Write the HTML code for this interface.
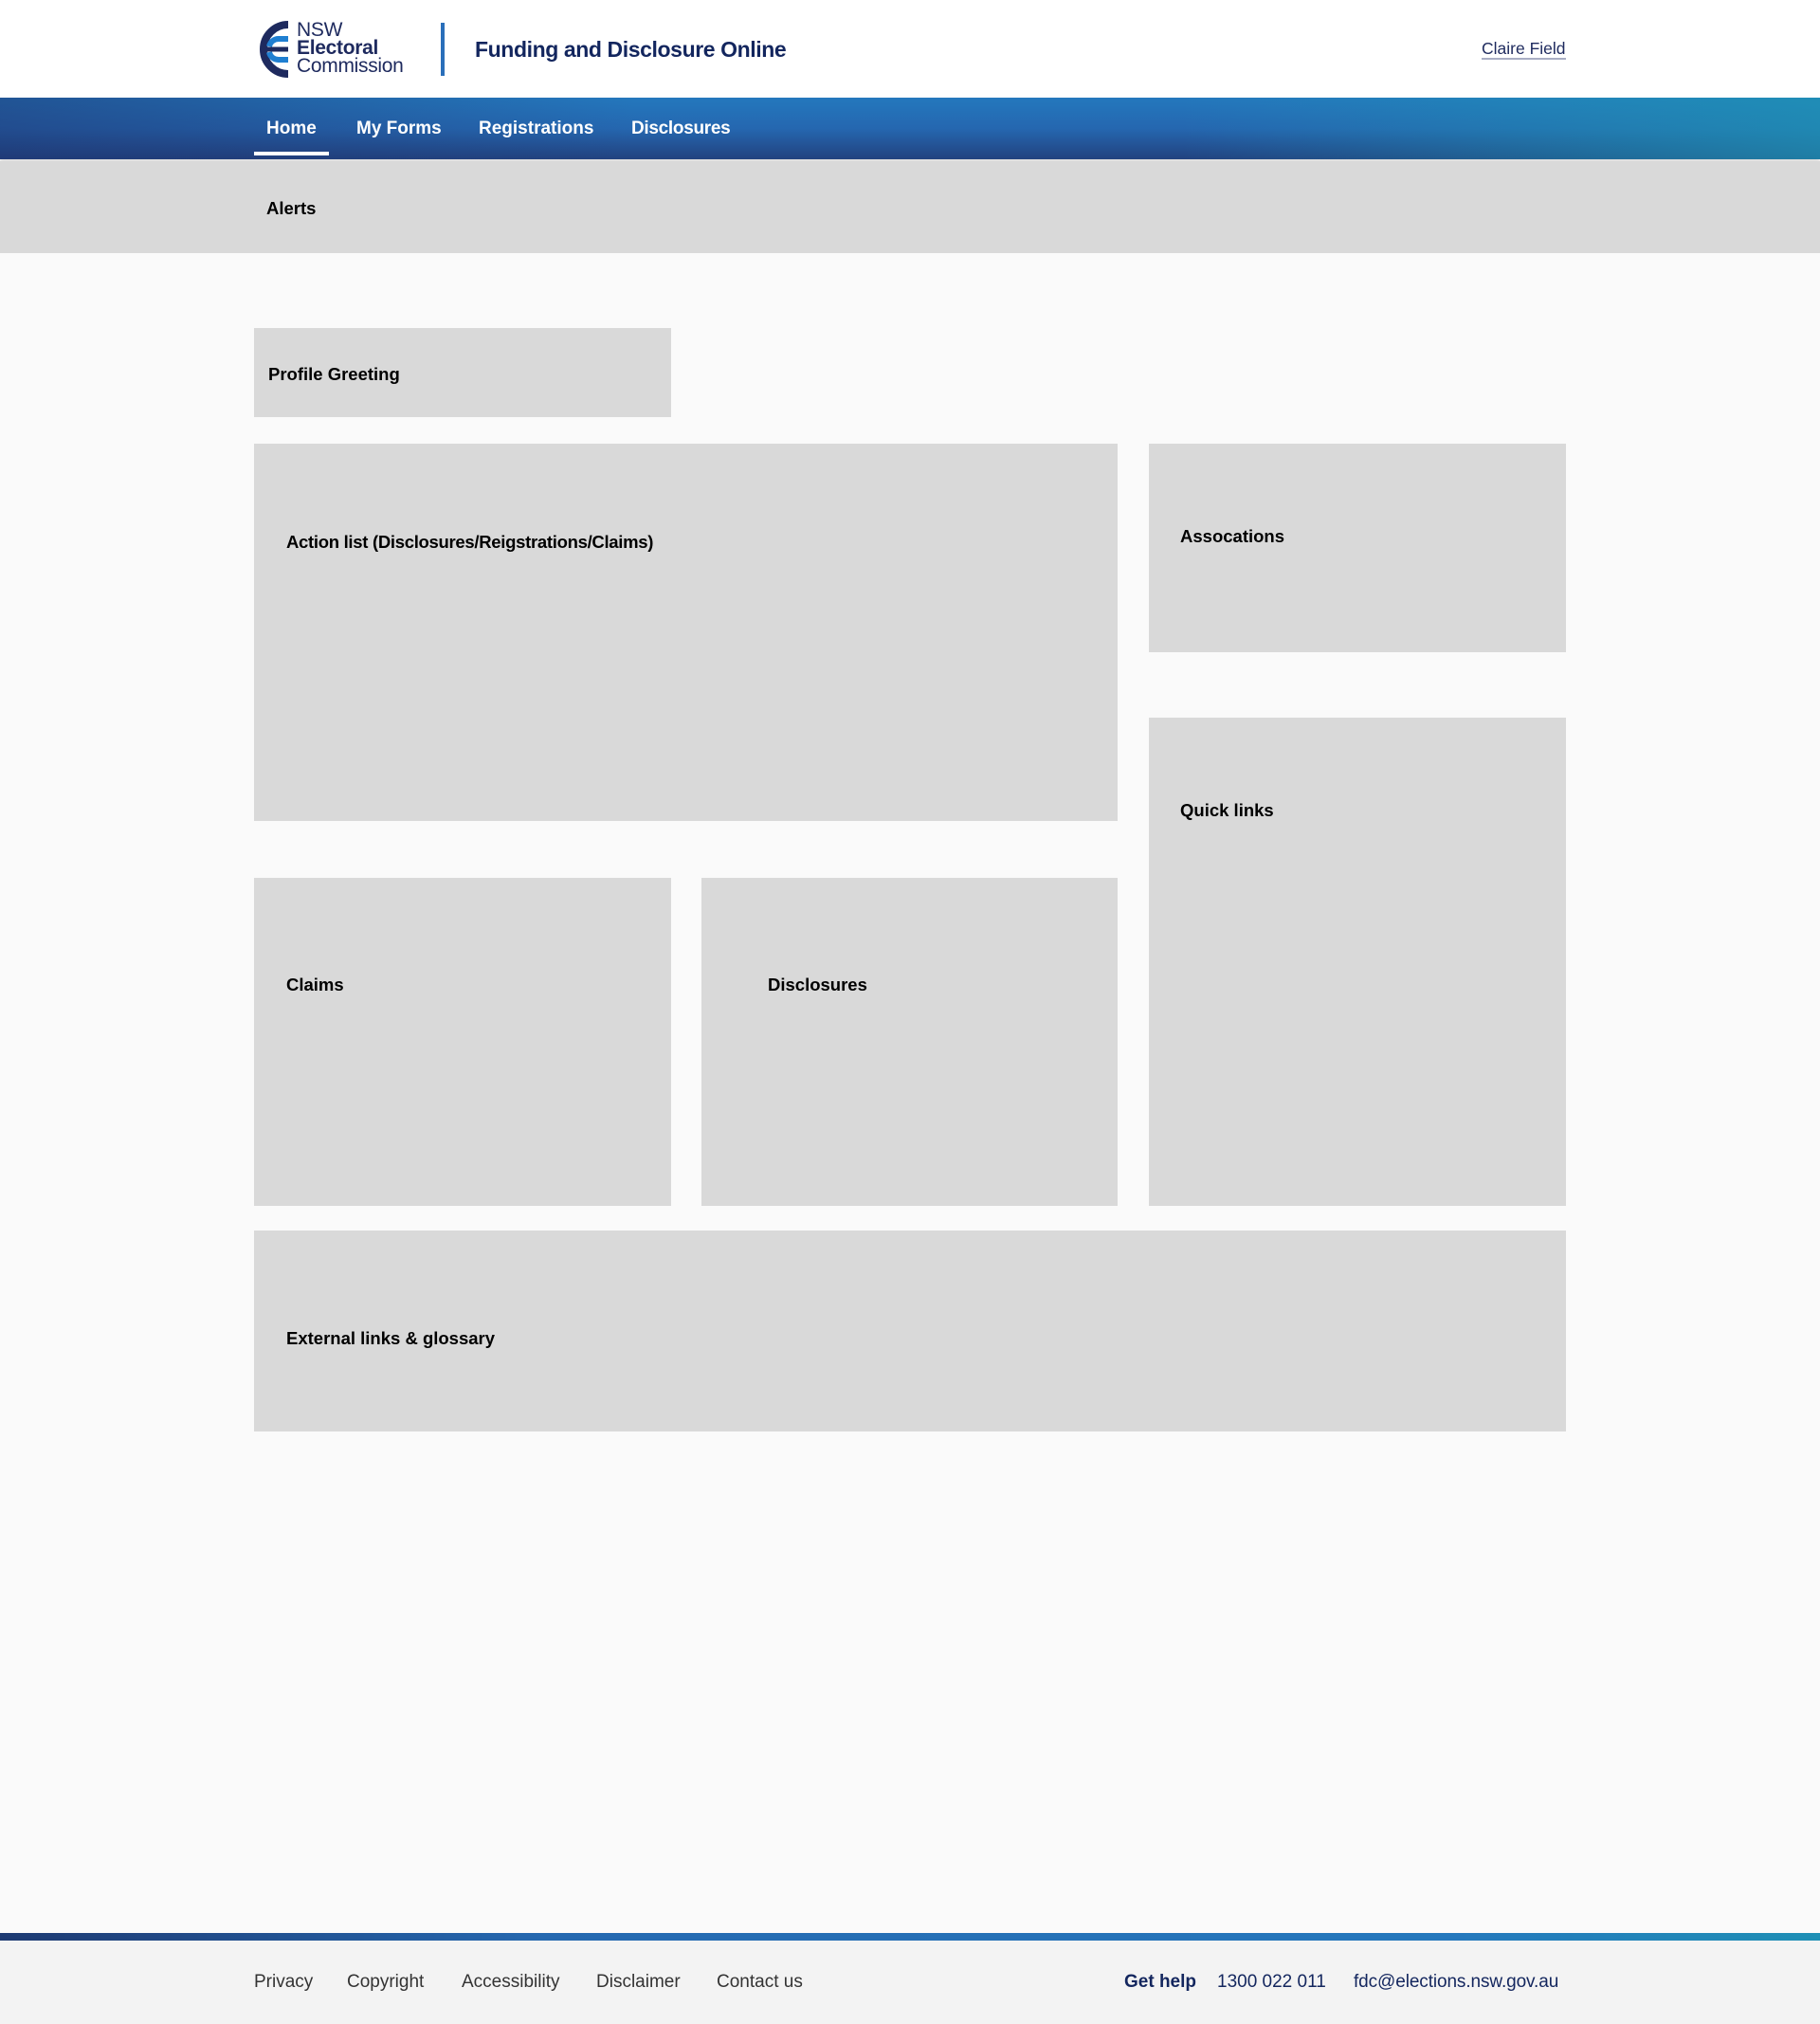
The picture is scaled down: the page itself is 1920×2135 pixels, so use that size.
<!DOCTYPE html>
<html><head><meta charset="utf-8"><style>
*{margin:0;padding:0;box-sizing:border-box}
body{width:1920px;height:2135px;background:#fafafa;font-family:"Liberation Sans",sans-serif;position:relative;overflow:hidden}
.a{position:absolute}
.box{position:absolute;background:#d9d9d9}
.lb{position:absolute;font-weight:bold;font-size:18.5px;color:#000;white-space:nowrap}
header{position:absolute;left:0;top:0;width:1920px;height:103px;background:#fff}
nav{position:absolute;left:0;top:103px;width:1920px;height:65px;
background:linear-gradient(90deg,rgba(30,50,110,0.5) 0%,rgba(30,50,110,0) 35%,rgba(30,150,180,0.0) 65%,rgba(30,150,180,0.7) 100%),linear-gradient(180deg,#2478bd 0%,#2567b0 50%,#22427f 100%);box-shadow:0 2px 3px rgba(0,0,0,0.15)}
nav span{position:absolute;top:22px;color:#fff;font-size:19px;font-weight:bold;white-space:nowrap}
.ft{position:absolute;top:2080px;font-size:19px;color:#333;white-space:nowrap}
</style></head><body>
<header>
<svg class="a" style="left:266px;top:22px" width="42" height="60" viewBox="0 0 42 60">
<path d="M38 4 A26 26 0 1 0 38 56" fill="none" stroke="#1e2a5e" stroke-width="8"/>
<path d="M38 19 H28 A10 10 0 0 0 18 27" fill="none" stroke="#1f7fd1" stroke-width="6"/>
<path d="M38 41 H28 A10 10 0 0 1 18 33" fill="none" stroke="#1f7fd1" stroke-width="6"/>
<rect x="10" y="27.5" width="28" height="5" fill="#1e2a5e"/>
</svg>
<div class="a" style="left:313px;top:22px;font-size:21px;line-height:19px;color:#1e2a5e;letter-spacing:-0.3px">NSW<br><b>Electoral</b><br>Commission</div>
<div class="a" style="left:465px;top:24px;width:4px;height:56px;background:#2a6fba"></div>
<div class="a" style="left:501px;top:39px;font-size:23px;font-weight:bold;color:#13265e;letter-spacing:-0.4px">Funding and Disclosure Online</div>
<div class="a" style="left:1563px;top:41px;font-size:17.5px;color:#1e2a5e;border-bottom:2px solid #a9aec4;line-height:20px">Claire Field</div>
</header>
<nav>
<span style="left:281px">Home</span>
<span style="left:376px">My Forms</span>
<span style="left:505px">Registrations</span>
<span style="left:666px;letter-spacing:-0.3px">Disclosures</span>
<div class="a" style="left:268px;top:57px;width:79px;height:4px;background:#fff"></div>
</nav>
<div class="box" style="left:0;top:170px;width:1920px;height:97px"></div>
<div class="lb" style="left:281px;top:209px">Alerts</div>

<div class="box" style="left:268px;top:346px;width:440px;height:94px"></div>
<div class="lb" style="left:283px;top:384px">Profile Greeting</div>

<div class="box" style="left:268px;top:468px;width:911px;height:398px"></div>
<div class="lb" style="left:302px;top:561px;letter-spacing:-0.3px">Action list (Disclosures/Reigstrations/Claims)</div>

<div class="box" style="left:1212px;top:468px;width:440px;height:220px"></div>
<div class="lb" style="left:1245px;top:555px">Assocations</div>

<div class="box" style="left:1212px;top:757px;width:440px;height:515px"></div>
<div class="lb" style="left:1245px;top:844px">Quick links</div>

<div class="box" style="left:268px;top:926px;width:440px;height:346px"></div>
<div class="lb" style="left:302px;top:1028px">Claims</div>

<div class="box" style="left:740px;top:926px;width:439px;height:346px"></div>
<div class="lb" style="left:810px;top:1028px">Disclosures</div>

<div class="box" style="left:268px;top:1298px;width:1384px;height:212px"></div>
<div class="lb" style="left:302px;top:1401px">External links &amp; glossary</div>

<div class="a" style="left:0;top:2039px;width:1920px;height:8px;background:linear-gradient(90deg,#1e3a72,#2468b0 30%,#2478bd 80%,#1e8fb5)"></div>
<div class="a" style="left:0;top:2047px;width:1920px;height:88px;background:#f3f3f3"></div>
<div class="ft" style="left:268px">Privacy</div>
<div class="ft" style="left:366px">Copyright</div>
<div class="ft" style="left:487px">Accessibility</div>
<div class="ft" style="left:629px">Disclaimer</div>
<div class="ft" style="left:756px">Contact us</div>
<div class="ft" style="left:1186px;color:#13265e;font-weight:bold">Get help</div>
<div class="ft" style="left:1284px;color:#13265e">1300 022 011</div>
<div class="ft" style="left:1428px;color:#13265e;letter-spacing:-0.1px">fdc@elections.nsw.gov.au</div>
</body></html>
